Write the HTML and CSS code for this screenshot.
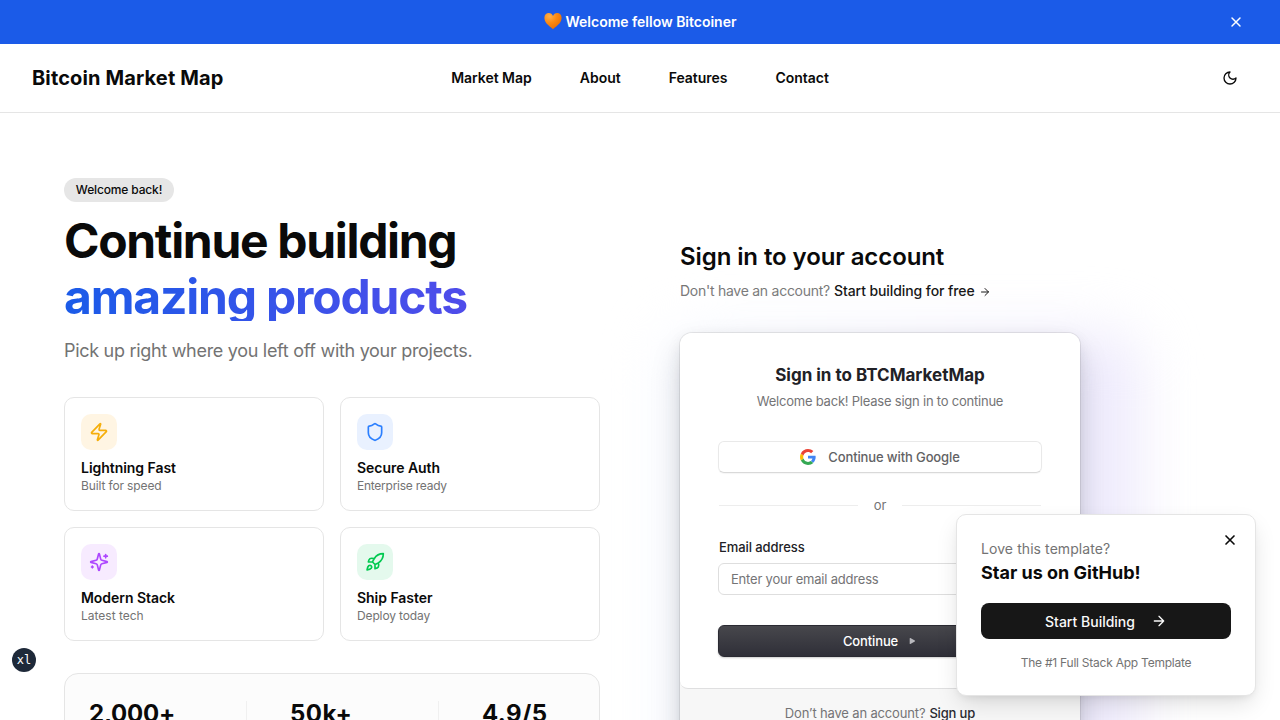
FILE: index.html
```html
<!DOCTYPE html>
<html lang="en">
<head>
<meta charset="utf-8">
<title>Bitcoin Market Map</title>
<link rel="stylesheet" href="styles.css">
</head>
<body>
<div class="banner">
  <svg class="heart" viewBox="0 0 18 18"><defs><radialGradient id="hg" cx=".3" cy=".2" r=".9"><stop offset="0" stop-color="#ffb04a"/><stop offset=".45" stop-color="#fb8a12"/><stop offset="1" stop-color="#e66a00"/></radialGradient></defs><path fill="url(#hg)" d="M9 17.3C7.6 15.300.4 11.700.4 5.900.4 2.900 2.300 1 4.800 1 6.800 1 8.300 2.200 9 3.900 9.700 2.200 11.200 1 13.200 1c2.500 0 4.400 1.900 4.400 4.900 0 5.800-7.200 9.400-8.600 11.400z"/></svg>
  <span class="banner-text">Welcome fellow Bitcoiner</span>
  <svg class="icon banner-close" viewBox="0 0 24 24"><path d="M18 6 6 18M6 6l12 12"/></svg>
</div>
<header class="header">
  <div class="brand"><span>Bitcoin Market Map</span></div>
  <nav class="nav"><a class="n1">Market Map</a><a class="n2">About</a><a class="n3">Features</a><a class="n4">Contact</a></nav>
  <svg class="icon moon" viewBox="0 0 24 24"><path d="M12 3a6 6 0 0 0 9 9 9 9 0 1 1-9-9Z"/></svg>
</header>
<main class="main">
  <section class="left">
    <div class="badge">Welcome back!</div>
    <h1 class="title"><span class="t1">Continue building</span><span class="t2">amazing products</span></h1>
    <p class="lead">Pick up right where you left off with your projects.</p>
    <div class="features">
      <div class="feature"><div class="tile amber"><svg class="icon" viewBox="0 0 24 24"><path d="M4 14a1 1 0 0 1-.78-1.630l9.900-10.200a.5.5 0 0 1 .86.460l-1.920 6.020A1 1 0 0 0 13 10h7a1 1 0 0 1 .78 1.630l-9.900 10.200a.5.5 0 0 1-.86-.460l1.920-6.020A1 1 0 0 0 11 14z"/></svg></div><h3 class="f1">Lightning Fast</h3><p>Built for speed</p></div>
      <div class="feature"><div class="tile blue"><svg class="icon" viewBox="0 0 24 24"><path d="M20 13c0 5-3.500 7.500-7.660 8.950a1 1 0 0 1-.67-.010C7.500 20.500 4 18 4 13V6a1 1 0 0 1 1-1c2 0 4.500-1.200 6.240-2.720a1.170 1.170 0 0 1 1.520 0C14.510 3.810 17 5 19 5a1 1 0 0 1 1 1z"/></svg></div><h3 class="f2">Secure Auth</h3><p class="tight">Enterprise ready</p></div>
      <div class="feature"><div class="tile purple"><svg class="icon" viewBox="0 0 24 24"><path d="M9.937 15.500A2 2 0 0 0 8.500 14.063l-6.135-1.582a.5.5 0 0 1 0-.962L8.500 9.936A2 2 0 0 0 9.937 8.500l1.582-6.135a.5.5 0 0 1 .963 0L14.063 8.500A2 2 0 0 0 15.500 9.937l6.135 1.581a.5.5 0 0 1 0 .964L15.500 14.063a2 2 0 0 0-1.437 1.437l-1.582 6.135a.5.5 0 0 1-.963 0zM20 3v4M22 5h-4M4 17v2M5 18H3"/></svg></div><h3 class="f3">Modern Stack</h3><p class="loose">Latest tech</p></div>
      <div class="feature"><div class="tile green"><svg class="icon" viewBox="0 0 24 24"><path d="M4.500 16.500c-1.500 1.260-2 5-2 5s3.740-.5 5-2c.71-.84.7-2.130-.09-2.910a2.180 2.180 0 0 0-2.910-.090zM12 15l-3-3a22 22 0 0 1 2-3.950A12.880 12.880 0 0 1 22 2c0 2.720-.78 7.500-6 11a22.350 22.350 0 0 1-4 2zM9 12H4s.55-3.030 2-4c1.620-1.080 5 0 5 0M12 15v5s3.030-.55 4-2c1.080-1.620 0-5 0-5"/></svg></div><h3 class="f4">Ship Faster</h3><p>Deploy today</p></div>
    </div>
    <div class="stats"><div class="stat s1"><b>2,000+</b></div><i></i><div class="stat s2"><b>50k+</b></div><i></i><div class="stat s3"><b>4.9/5</b></div></div>
  </section>
  <section class="right">
    <h2 class="signin">Sign in to your account</h2>
    <p class="noacc"><span class="q">Don't have an account?</span><a>Start building for free</a><svg class="icon" viewBox="0 0 24 24"><path d="M5 12h14M12 5l7 7-7 7"/></svg></p>
    <div class="card-wrap">
      <div class="glow"></div>
      <div class="card">
        <div class="card-body">
          <h3 class="card-title">Sign in to BTCMarketMap</h3>
          <p class="card-sub">Welcome back! Please sign in to continue</p>
          <div class="google"><svg viewBox="0 0 24 24"><path fill="#4285f4" d="M23.500 12.270c0-.85-.07-1.470-.22-2.110H12v4.080h6.600c-.13 1.060-.85 2.650-2.450 3.720l3.560 2.770c2.300-2.100 3.790-5.190 3.790-8.460z"/><path fill="#34a853" d="M12 24c3.240 0 5.960-1.070 7.940-2.910l-3.790-2.930c-1.010.71-2.370 1.200-4.150 1.200-3.170 0-5.860-2.090-6.820-4.990l-3.900 3.020C3.260 21.300 7.310 24 12 24z"/><path fill="#fbbc05" d="M5.180 14.370A7.400 7.400 0 0 1 4.770 12c0-.83.15-1.630.4-2.370L1.270 6.600A12 12 0 0 0 0 12c0 1.940.47 3.770 1.280 5.390z"/><path fill="#ea4335" d="M12 4.640c2.250 0 3.770.97 4.640 1.790l3.390-3.310C17.950 1.190 15.240 0 12 0 7.310 0 3.260 2.690 1.280 6.610l3.890 3.020C6.140 6.730 8.830 4.640 12 4.640z"/></svg><span>Continue with Google</span></div>
          <div class="or"><i></i><span>or</span><i></i></div>
          <label class="label">Email address</label>
          <div class="input"><span>Enter your email address</span></div>
          <div class="continue"><span>Continue</span><svg viewBox="0 0 10 10"><path d="M2.700 2.500v5q0 .8.700.4L7.800 5.500q.6-.5 0-.9L3.400 2.100q-.7-.4-.7.4z"/></svg></div>
        </div>
        <div class="card-foot"><span class="fq">Don’t have an account?</span><b>Sign up</b></div>
      </div>
    </div>
  </section>
</main>
<aside class="popup">
  <svg class="icon popup-close" viewBox="0 0 24 24"><path d="M18 6 6 18M6 6l12 12"/></svg>
  <p class="love"><span>Love this template?</span></p>
  <h3 class="star"><span>Star us on GitHub!</span></h3>
  <div class="start"><span>Start Building</span><svg class="icon" viewBox="0 0 24 24"><path d="M5 12h14M12 5l7 7-7 7"/></svg></div>
  <p class="tpl"><span>The #1 Full Stack App Template</span></p>
</aside>
<div class="size">xl</div>
</body>
</html>
```

FILE: styles.css
```css
* { box-sizing: border-box; margin: 0; padding: 0; }
html, body { width: 1280px; height: 720px; overflow: hidden; }
body { font-family: Inter, "Liberation Sans", sans-serif; background: #fff; color: #0a0a0a; position: relative; white-space: nowrap; -webkit-font-smoothing: antialiased; }
.icon { fill: none; stroke: currentColor; stroke-width: 2; stroke-linecap: round; stroke-linejoin: round; display: block; flex: none; }

.banner { height: 44px; background: #1b5be8; color: #fff; display: flex; align-items: center; justify-content: center; gap: 4px; position: relative; font-size: 14px; font-weight: 600; }
.heart { width: 18px; height: 18px; flex: none; margin-top: -2px; }
.banner-text { letter-spacing: -.02px; padding-bottom: 1px; }
.banner-close { position: absolute; right: 36px; top: 14px; width: 16px; height: 16px; stroke-width: 2.200; }

.header { height: 69px; border-bottom: 1px solid #e5e5e5; display: grid; grid-template-columns: 1fr auto 1fr; align-items: center; padding: 0 42px 0 32px; }
.brand { font-size: 20px; font-weight: 700; letter-spacing: .13px; }
.nav { display: flex; gap: 48px; font-size: 14px; font-weight: 600; margin-left: 10px; padding-bottom: 1px; letter-spacing: -.02px; }
.moon { width: 16px; height: 16px; justify-self: end; }

.main { display: grid; grid-template-columns: 536px 400px; gap: 80px; padding: 65px 64px 0; }
.badge { width: 110px; height: 24px; border-radius: 12px; background: #e6e6e6; display: flex; align-items: center; justify-content: center; font-size: 12px; font-weight: 500; letter-spacing: -.15px; padding-bottom: 1px; }
.title { margin-top: 11px; font-size: 48px; line-height: 56px; font-weight: 700; display: flex; flex-direction: column; align-items: flex-start; }
.t1 { letter-spacing: -1.320px; }
.t2 { letter-spacing: -1.200px; color: transparent; background: linear-gradient(90deg, #1b5be8, #4f4cea); background-clip: text; -webkit-background-clip: text; height: 52px; margin-bottom: 5px; line-height: 56px; }
.lead { margin-top: 11px; font-size: 18px; line-height: 28px; color: #737373; letter-spacing: -.3px; }
.features { margin-top: 32px; display: grid; grid-template-columns: 1fr 1fr; gap: 16px; }
.feature { height: 114px; border: 1px solid #e5e5e5; border-radius: 10px; padding: 16px; }
.feature h3 { margin-top: 8px; font-size: 14px; line-height: 20px; font-weight: 600; letter-spacing: -.04px; }
.feature p { font-size: 12px; line-height: 16px; color: #737373; letter-spacing: -.13px; }
.feature .tight { letter-spacing: -.25px; }
.feature .loose { letter-spacing: 0; }
.tile { width: 36px; height: 36px; border-radius: 10px; display: grid; place-items: center; }
.tile .icon { width: 20px; height: 20px; }
.amber { background: #fff5e3; color: #f5ae0a; }
.blue { background: #e9f1ff; color: #2b7fff; }
.purple { background: #f7ebff; color: #ad46ff; }
.green { background: #e4f9ed; color: #00c950; }
.stats { margin-top: 32px; height: 110px; border: 1px solid #e5e5e5; border-radius: 14px; background: #fcfcfc; padding: 24px; display: grid; grid-template-columns: 157px 1px 191px 1px 136px; }
.stats i { background: #f0f0f0; height: 40px; margin-top: 3px; }
.stat { font-size: 24px; line-height: 32px; }
.s1 { letter-spacing: -.2px; }
.s2 { padding-left: 43px; letter-spacing: .5px; }
.s3 { padding-left: 43px; letter-spacing: .4px; }

.right { padding-top: 63px; }
.signin { font-size: 24px; line-height: 32px; font-weight: 600; letter-spacing: -.09px; }
.noacc { margin-top: 8px; font-size: 14px; line-height: 20px; color: #737373; display: flex; align-items: center; }
.q { letter-spacing: -.26px; }
.noacc a { color: #0a0a0a; font-weight: 500; margin-left: 4px; letter-spacing: -.09px; }
.noacc .icon { width: 12px; height: 12px; margin-left: 4px; margin-top: 1px; color: #0a0a0a; }
.card-wrap { position: relative; margin-top: 32px; }
.glow { position: absolute; left: -16px; right: -58px; top: 0; height: 600px; border-radius: 32px; background: linear-gradient(90deg, #f6f9ff, #ede9fc); filter: blur(28px); }
.card { position: relative; border-radius: 12px; background: #f7f7f7; box-shadow: 0 0 0 1px rgba(0,0,0,.08), 0 5px 15px rgba(0,0,0,.08), 0 15px 35px -5px rgba(25,28,33,.2); height: 430px; }
.card-body { height: 356px; background: #fff; border-radius: 12px 12px 8px 8px; border-bottom: 1px solid #dfdfe0; padding: 30px 38px 0; }
.card-title { text-align: center; font-size: 17px; line-height: 24px; font-weight: 700; color: #212126; }
.card-sub { text-align: center; margin-top: 5px; font-size: 13px; line-height: 18px; color: #747476; letter-spacing: -.22px; }
.google { height: 32px; margin-top: 31px; border: 1px solid #e9e9e9; border-bottom-color: #d9d9d9; border-radius: 6px; box-shadow: 0 1px 1px rgba(0,0,0,.04); display: flex; align-items: center; justify-content: center; gap: 12px; font-size: 13px; font-weight: 500; color: #626264; letter-spacing: -.12px; }
.google svg { width: 16px; height: 16px; }
.or { display: flex; align-items: center; gap: 16px; margin: 23px 1px 0; font-size: 13px; line-height: 18px; color: #747476; }
.or i { flex: 1; height: 1px; background: #ededed; }
.label { display: block; margin: 24px 1px 0; font-size: 13px; line-height: 18px; font-weight: 500; color: #212126; letter-spacing: -.08px; }
.input { height: 32px; margin-top: 7px; border: 1px solid #dedede; border-radius: 6px; padding-left: 12px; font-size: 13px; line-height: 30px; color: #747476; letter-spacing: -.2px; }
.continue { height: 32px; margin-top: 30px; border-radius: 6px; border: 1px solid #2a2a32; background: linear-gradient(#47474c, #2f2f38); box-shadow: 0 1px 2px rgba(0,0,0,.2); color: #fff; font-size: 13px; font-weight: 500; display: flex; align-items: center; justify-content: center; gap: 9px; letter-spacing: -.12px; }
.continue svg { width: 10px; height: 10px; fill: #b8b8bd; }
.card-foot { padding-top: 15px; display: flex; justify-content: center; gap: 4px; font-size: 13px; line-height: 18px; color: #747476; letter-spacing: -.16px; }
.card-foot b { font-weight: 500; color: #2a2a30; }

.popup { position: absolute; left: 956px; top: 514px; width: 300px; height: 182px; background: #fff; border: 1px solid #e5e5e5; border-radius: 10px; padding: 24px; box-shadow: 0 10px 24px -4px rgba(0,0,0,.14), 0 4px 8px -4px rgba(0,0,0,.1); }
.popup-close { position: absolute; right: 17px; top: 17px; width: 16px; height: 16px; stroke-width: 2.500; }
.love { font-size: 14px; line-height: 20px; color: #737373; letter-spacing: .08px; }
.star { font-size: 18px; line-height: 28px; font-weight: 700; }
.start { height: 36px; margin-top: 16px; border-radius: 8px; background: #171717; color: #fafafa; display: flex; align-items: center; justify-content: center; gap: 16px; font-size: 14px; font-weight: 500; }
.start .icon { width: 16px; height: 16px; }
.tpl { margin-top: 16px; text-align: center; font-size: 12px; line-height: 16px; color: #737373; letter-spacing: -.24px; }
.size { position: absolute; left: 12px; top: 648px; width: 24px; height: 24px; border-radius: 50%; background: #1e2939; color: #fff; font: 12px/24px "DejaVu Sans Mono", monospace; text-align: center; }
```
